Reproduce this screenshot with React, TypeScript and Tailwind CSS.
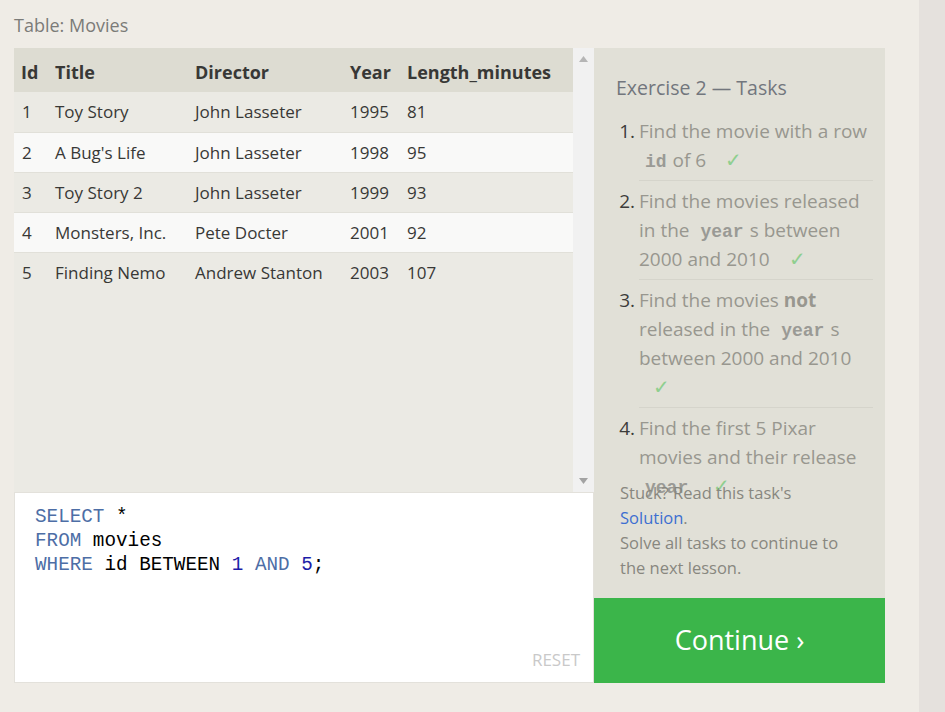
import React from "react";

interface IMovie {
  id: number;
  title: string;
  director: string;
  year: number;
  length: number;
}

const movies: IMovie[] = [
  { id: 1, title: "Toy Story", director: "John Lasseter", year: 1995, length: 81 },
  { id: 2, title: "A Bug's Life", director: "John Lasseter", year: 1998, length: 95 },
  { id: 3, title: "Toy Story 2", director: "John Lasseter", year: 1999, length: 93 },
  { id: 4, title: "Monsters, Inc.", director: "Pete Docter", year: 2001, length: 92 },
  { id: 5, title: "Finding Nemo", director: "Andrew Stanton", year: 2003, length: 107 },
];

const Code = ({ children }: { children: React.ReactNode }) => (
  <span className="px-[6px] font-['Liberation_Mono',monospace] text-[18px] leading-none font-bold text-[#9a9a95]">
    {children}
  </span>
);

const Check = () => <span className="ml-[14px] text-[20px] leading-none text-[#8fcf8f]">✓</span>;

const tasks: React.ReactNode[] = [
  <>
    Find the movie with a row <Code>id</Code>of 6 <Check />
  </>,
  <>
    Find the movies released in the <Code>year</Code>s between 2000 and 2010 <Check />
  </>,
  <>
    Find the movies <b className="font-bold">not</b> released in the <Code>year</Code>s
    between 2000 and 2010 <Check />
  </>,
  <>
    Find the first 5 Pixar movies and their release <Code>year</Code> <Check />
  </>,
];

const cols = "grid grid-cols-[33px_140px_155px_57px_1fr]";

const App = () => {
  return (
    <div className="flex h-[712px] w-full font-['Open_Sans',sans-serif] bg-[#efece6]">
      <div className="w-[919px] pl-[14px] pt-[11px]">
        <p className="text-[18px] leading-[28px] text-[#7b7b78] mb-[9px]">Table: Movies</p>

        <div className="flex w-[871px]">
          {/* Left: table + editor */}
          <div className="w-[580px] flex flex-col">
            <div className="flex h-[444px] bg-[#ebeae4]">
              <div className="flex-1 text-[17px] text-[#383836]">
                <div className={`${cols} h-[44px] items-center bg-[#dddcd2] pt-[4px] text-[18px] font-bold`}>
                  <span className="pl-[7px]">Id</span>
                  <span className="pl-[8px]">Title</span>
                  <span className="pl-[8px]">Director</span>
                  <span className="pl-[8px]">Year</span>
                  <span className="pl-[8px]">Length_minutes</span>
                </div>
                {movies.map((m, i) => (
                  <div
                    key={m.id}
                    className={`${cols} h-[40px] items-center ${
                      i % 2 === 1 ? "bg-[#f9f9f8]" : "bg-[#ebeae4]"
                    } ${i > 0 ? "border-t border-[#e1e0d9]" : ""}`}
                  >
                    <span className="pl-[8px]">{m.id}</span>
                    <span className="pl-[8px]">{m.title}</span>
                    <span className="pl-[8px]">{m.director}</span>
                    <span className="pl-[8px]">{m.year}</span>
                    <span className="pl-[8px]">{m.length}</span>
                  </div>
                ))}
              </div>
              {/* Scrollbar */}
              <div className="w-[21px] bg-[#f1f1f1] flex flex-col justify-between items-center py-[8px]">
                <svg width="9" height="6" viewBox="0 0 9 6">
                  <path d="M0 6 L4.5 0 L9 6 Z" fill="#b5b5b5" />
                </svg>
                <svg width="9" height="6" viewBox="0 0 9 6">
                  <path d="M0 0 L4.5 6 L9 0 Z" fill="#a3a3a3" />
                </svg>
              </div>
            </div>

            <div className="h-[191px] bg-white border border-[#e3e1db] flex flex-col pl-[20px] pt-[12px] pr-[13px] pb-[10px]">
              <pre className="font-['Liberation_Mono',monospace] text-[19.3px] leading-[24px] text-black">
                <span className="text-[#4d6ea6]">SELECT</span> *{"\n"}
                <span className="text-[#4d6ea6]">FROM</span> movies{"\n"}
                <span className="text-[#4d6ea6]">WHERE</span> id BETWEEN{" "}
                <span className="text-[#1c1ca8]">1</span>{" "}
                <span className="text-[#4d6ea6]">AND</span>{" "}
                <span className="text-[#1c1ca8]">5</span>;
              </pre>
              <span className="mt-auto self-end text-[17px] text-[#c9c9c9]">RESET</span>
            </div>
          </div>

          {/* Right: tasks */}
          <div className="w-[291px] flex flex-col">
            <div className="h-[550px] bg-[#e1e0d7] flex flex-col pl-[22px] pr-[12px] pt-[26px]">
              <h3 className="text-[19.5px] leading-[28px] text-[#72767d]">Exercise 2 — Tasks</h3>
              {/* list is clipped in height but not in overflow, so the last task runs under the help text */}
              <ol className="mt-[15px] flex-1 min-h-0 text-[19px] leading-[29px] text-[#98978f]">
                {tasks.map((t, i) => (
                  <li
                    key={i}
                    className={`flex ${i > 0 ? "pt-[6px]" : ""} ${
                      i < tasks.length - 1 ? "pb-[6px]" : ""
                    }`}
                  >
                    <span className="w-[19px] shrink-0 text-right text-[#3c3c3a]">{i + 1}.</span>
                    <span
                      className={`ml-[4px] flex-1 ${
                        i < tasks.length - 1 ? "border-b border-[#d5d4cb] pb-[5px] -mb-[6px]" : ""
                      }`}
                    >
                      {t}
                    </span>
                  </li>
                ))}
              </ol>
              <div className="pb-[18px] text-[16.5px] leading-[25px] text-[#88877f] pl-[4px]">
                <p>Stuck? Read this task's</p>
                <p>
                  <a className="text-[#3d6fd1]">Solution</a>.
                </p>
                <p>Solve all tasks to continue to</p>
                <p>the next lesson.</p>
              </div>
            </div>
            <button className="h-[85px] bg-[#3bb54a] text-white text-[27px]">Continue ›</button>
          </div>
        </div>
      </div>
      <div className="flex-1 bg-[#e5e1dd]" />
    </div>
  );
};

export default App;
